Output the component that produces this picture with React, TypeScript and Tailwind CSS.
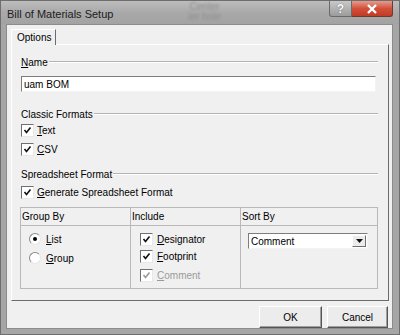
import React from 'react';

const ui = { fontFamily: '"Liberation Sans", Arial, sans-serif' };

const Check = ({ disabled }: { disabled?: boolean }) => (
  <span className="w-[13px] h-[13px] shrink-0 bg-white border border-t-[#6f6f6f] border-l-[#6f6f6f] border-r-[#e8e8e8] border-b-[#e8e8e8] flex items-center justify-center">
    <svg width="9" height="9" viewBox="0 0 9 9">
      <path d="M1.5 4 L3.5 6.5 L7.5 1.5" fill="none" stroke={disabled ? '#9a9a9a' : '#111'} strokeWidth="1.6" />
    </svg>
  </span>
);

const Radio = ({ on }: { on?: boolean }) => (
  <span className="w-[12px] h-[12px] shrink-0 rounded-full bg-white border border-t-[#8a8a8a] border-l-[#8a8a8a] border-r-[#e6e6e6] border-b-[#e6e6e6] flex items-center justify-center">
    {on && <span className="w-[4px] h-[4px] rounded-full bg-black" />}
  </span>
);

// label with underlined access key (first letter)
const Key = ({ text, grey }: { text: string; grey?: boolean }) => (
  <span className={grey ? 'text-[#9a9a9a]' : 'text-black'}>
    <span className="underline underline-offset-1">{text[0]}</span>
    {text.slice(1)}
  </span>
);

const Section = ({ children }: { children: React.ReactNode }) => (
  <div className="flex items-center h-[14px] pl-[9px] pr-[10px]">
    <span className="shrink-0 pr-[1px]">{children}</span>
    <span className="flex-1 h-0 border-t border-[#b4b4b4] border-b border-b-white" />
  </div>
);

export default function App() {
  return (
    <div
      className="w-[400px] h-[335px] bg-[#a6a6a6] border border-[#6e6e6e] flex flex-col overflow-hidden text-[10px]"
      style={ui}
    >
      {/* title bar */}
      <div className="h-[23px] shrink-0 flex items-start bg-gradient-to-b from-[#bdbdbd] via-[#a9a9a9] to-[#a3a3a3]">
        <span className="pl-[6px] pt-[5px] text-[11px] text-[#1c1c1c]">Bill of Materials Setup</span>
        <div className="flex-1" />
        {/* blurred window behind the glass */}
        <div className="mr-[108px] pt-[1px] flex flex-col items-center text-[10px] leading-[10px] text-[#909090] blur-[1px]">
          <span>Center</span>
          <span>ier hole</span>
        </div>
        <div className="flex mr-[6px]">
          <div className="w-[23px] h-[16px] rounded-bl-[3px] border border-[#6a6a6a] border-t-0 bg-gradient-to-b from-[#c9c9c9] to-[#9c9c9c] flex items-center justify-center text-white text-[12px] font-bold leading-none [text-shadow:0_0_1px_#444]">
            ?
          </div>
          <div className="w-[41px] h-[16px] rounded-br-[3px] border border-[#6a3a33] border-t-0 border-l-0 bg-gradient-to-b from-[#e49a8c] via-[#d2503b] to-[#c33a24] flex items-center justify-center">
            <svg width="12" height="10" viewBox="0 0 12 10">
              <path d="M2 1 L10 9 M10 1 L2 9" stroke="#fff" strokeWidth="2.4" />
            </svg>
          </div>
        </div>
      </div>

      {/* client area */}
      <div className="ml-[5px] mr-[6px] mb-[6px] flex-1 bg-[#f0f0f0] border border-[#8c8c8c] flex flex-col">
        {/* tab strip */}
        <div className="h-[19px] shrink-0 flex items-end pl-[4px] pt-[3px]">
          <div className="h-[16px] w-[45px] border-l border-t border-white border-r border-r-[#6b6b6b] bg-[#f0f0f0] -mb-px relative z-10 flex items-center pl-[5px] text-black">
            Options
          </div>
        </div>

        {/* tab page */}
        <div className="ml-[4px] w-[378px] h-[257px] shrink-0 border border-t-white border-l-white border-r-[#6b6b6b] border-b-[#6b6b6b] flex flex-col pt-[10px]">
          <Section>
            <Key text="Name" />
          </Section>
          <div className="mt-[7px] ml-[9px] mr-[12px] h-[16px] bg-white border border-t-[#7d7d7d] border-l-[#7d7d7d] border-r-[#f4f4f4] border-b-[#f4f4f4] flex items-center pl-[2px] text-black">
            uam BOM
          </div>

          <div className="mt-[15px]">
            <Section>Classic Formats</Section>
          </div>
          <div className="mt-[2px] h-[14px] pl-[9px] flex items-center gap-[3px]">
            <Check />
            <Key text="Text" />
          </div>
          <div className="mt-[5px] h-[14px] pl-[9px] flex items-center gap-[3px]">
            <Check />
            <Key text="CSV" />
          </div>

          <div className="mt-[11px]">
            <Section>Spreadsheet Format</Section>
          </div>
          <div className="mt-[4px] h-[14px] pl-[9px] flex items-center gap-[3px]">
            <Check />
            <Key text="Generate Spreadsheet Format" />
          </div>

          {/* options table */}
          <div className="mt-[8px] ml-[8px] mr-[10px] h-[82px] border border-[#b9b9b9] grid grid-cols-[110px_110px_1fr] grid-rows-[18px_1fr]">
            <div className="border-r border-b border-[#b9b9b9] flex items-center pl-[1px]">Group By</div>
            <div className="border-r border-b border-[#b9b9b9] flex items-center pl-[1px]">Include</div>
            <div className="border-b border-[#b9b9b9] flex items-center pl-[1px]">Sort By</div>

            <div className="border-r border-[#b9b9b9] flex flex-col pl-[8px] pt-[7px] gap-[7px]">
              <div className="h-[12px] flex items-center gap-[5px]">
                <Radio on />
                <Key text="List" />
              </div>
              <div className="h-[12px] flex items-center gap-[5px]">
                <Radio />
                <Key text="Group" />
              </div>
            </div>
            <div className="border-r border-[#b9b9b9] flex flex-col pl-[9px] pt-[7px] gap-[4px]">
              <div className="h-[13px] flex items-center gap-[4px]">
                <Check />
                <Key text="Designator" />
              </div>
              <div className="h-[13px] flex items-center gap-[4px]">
                <Check />
                <Key text="Footprint" />
              </div>
              <div className="mt-[2px] h-[13px] flex items-center gap-[4px]">
                <Check disabled />
                <Key text="Comment" grey />
              </div>
            </div>
            <div className="pl-[7px] pt-[7px]">
              <div className="w-[120px] h-[16px] bg-white border border-t-[#7d7d7d] border-l-[#7d7d7d] border-r-[#f4f4f4] border-b-[#f4f4f4] flex items-center">
                <span className="flex-1 pl-[2px] text-black">Comment</span>
                <span className="w-[14px] h-[12px] mr-[1px] bg-[#ececec] border border-t-white border-l-white border-r-[#707070] border-b-[#707070] flex items-center justify-center">
                  <svg width="7" height="4" viewBox="0 0 7 4">
                    <path d="M0 0 H7 L3.5 4 Z" fill="#111" />
                  </svg>
                </span>
              </div>
            </div>
          </div>
        </div>

        {/* buttons */}
        <div className="flex justify-end gap-[5px] pr-[4px] mt-[5px]">
          <button className="w-[63px] h-[22px] bg-[#ececec] border border-t-white border-l-white border-r-[#555] border-b-[#555] shadow-[inset_-1px_-1px_0_#a0a0a0] text-black text-[10px]" style={ui}>
            OK
          </button>
          <button className="w-[61px] h-[22px] bg-[#ececec] border border-t-white border-l-white border-r-[#555] border-b-[#555] shadow-[inset_-1px_-1px_0_#a0a0a0] text-black text-[10px]" style={ui}>
            Cancel
          </button>
        </div>
      </div>
    </div>
  );
}
